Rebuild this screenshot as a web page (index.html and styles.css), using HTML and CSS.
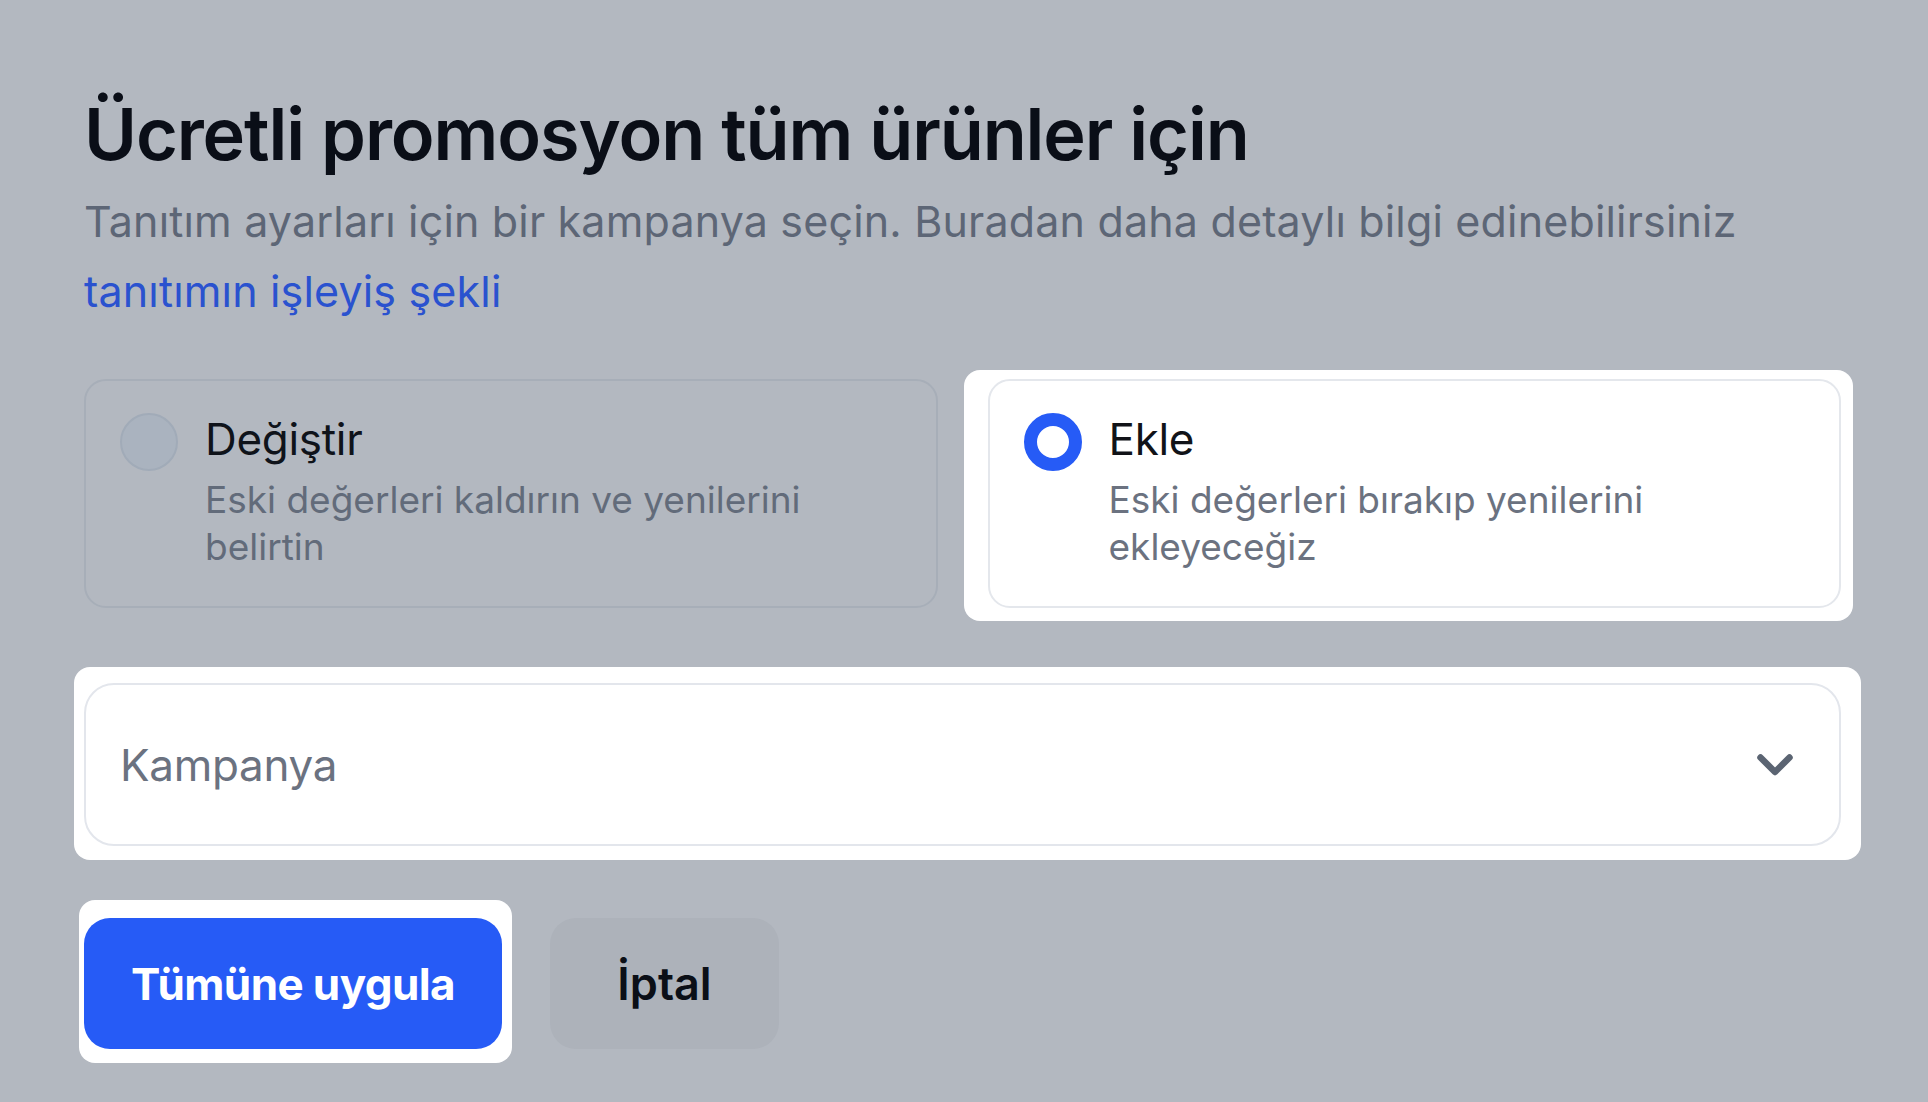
FILE: index.html
```html
<!DOCTYPE html>
<html lang="tr">
<head>
<meta charset="utf-8">
<title>Ücretli promosyon</title>
<link rel="stylesheet" href="styles.css">
</head>
<body>
<main class="page">
  <h1 class="title">Ücretli promosyon tüm ürünler için</h1>
  <p class="lead">Tanıtım ayarları için bir kampanya seçin. Buradan daha detaylı bilgi edinebilirsiniz<br><a class="lead-link" href="#">tanıtımın işleyiş şekli</a></p>

  <div class="options">
    <div class="option option-dim">
      <span class="radio radio-off"></span>
      <div class="option-text">
        <div class="option-label">Değiştir</div>
        <div class="option-desc">Eski değerleri kaldırın ve yenilerini belirtin</div>
      </div>
    </div>
    <div class="spot spot-option">
      <div class="option option-lit">
        <span class="radio radio-on"></span>
        <div class="option-text">
          <div class="option-label">Ekle</div>
          <div class="option-desc">Eski değerleri bırakıp yenilerini ekleyeceğiz</div>
        </div>
      </div>
    </div>
  </div>

  <div class="spot spot-select">
    <div class="select">
      <span class="select-placeholder">Kampanya</span>
      <svg class="chevron" width="38" height="25" viewBox="0 0 38 25" aria-hidden="true"><path d="M4.5 4.5 L19 19 L33.5 4.5" fill="none" stroke="#5b6472" stroke-width="6.5" stroke-linecap="round" stroke-linejoin="round"/></svg>
    </div>
  </div>

  <div class="actions">
    <div class="spot spot-btn">
      <button class="btn btn-primary" type="button">Tümüne uygula</button>
    </div>
    <button class="btn btn-ghost" type="button">İptal</button>
  </div>
</main>
</body>
</html>
```

FILE: styles.css
```css
* { box-sizing: border-box; }

html, body {
  margin: 0;
  height: 100%;
}

body {
  background: #b3b8c0;
  font-family: Inter, "Noto Sans", "Liberation Sans", sans-serif;
  color: #0a0e17;
  overflow: hidden;
}

.page {
  padding: 91px 87px 0 84px;
  display: flex;
  flex-direction: column;
}

.title {
  margin: 0;
  font-size: 72px;
  line-height: 86px;
  font-weight: 600;
  letter-spacing: -1.1px;
  color: #0a0e17;
}

.lead {
  margin: 9px 0 0;
  font-size: 43px;
  line-height: 70px;
  color: #5d6676;
  letter-spacing: 0.17px;
}

.lead-link {
  color: #2a52cf;
  text-decoration: none;
}

.options {
  margin-top: 53px;
  display: grid;
  grid-template-columns: 1fr 1fr;
  column-gap: 50px;
}

.spot {
  background: #ffffff;
  border-radius: 16px;
}

.spot-option {
  margin: -9px -12px -13px -24px;
  padding: 9px 12px 13px 24px;
}

.option {
  display: flex;
  align-items: flex-start;
  gap: 27px;
  padding: 32px 30px 36px 34px;
  border: 2px solid;
  border-radius: 22px;
  height: 100%;
}

.option-dim {
  border-color: #a7aeb8;
  background: #b3b8c0;
}

.option-lit {
  border-color: #e4e7ec;
  background: #ffffff;
}

.radio {
  flex: 0 0 58px;
  width: 58px;
  height: 58px;
  border-radius: 50%;
}

.radio-off {
  background: #aab3bf;
  border: 2px solid #a1abb8;
}

.radio-on {
  background: #ffffff;
  border: 13.5px solid #265bf6;
}

.option-text {
  display: flex;
  flex-direction: column;
  gap: 10px;
  margin-top: -1px;
}

.option-label {
  font-size: 44px;
  line-height: 54px;
  letter-spacing: -0.3px;
}

.option-desc {
  font-size: 37px;
  line-height: 47px;
  letter-spacing: 0;
}

.option-dim .option-label { color: #0f131a; }
.option-dim .option-desc { color: #626b7a; }
.option-lit .option-label { color: #111318; }
.option-lit .option-desc { color: #6b7280; }

.spot-select {
  margin: 59px -20px 0 -10px;
  padding: 16px 20px 14px 10px;
}

.select {
  height: 163px;
  border: 2px solid #e3e6ec;
  border-radius: 30px;
  background: #ffffff;
  display: flex;
  align-items: center;
  justify-content: space-between;
  padding: 0 45px 0 34px;
}

.select-placeholder {
  font-size: 44px;
  color: #6b7280;
  letter-spacing: -0.3px;
}

.chevron {
  display: block;
  margin-top: 2px;
}

.actions {
  margin-top: 40px;
  display: flex;
  align-items: flex-end;
  gap: 38px;
}

.spot-btn {
  margin-left: -5px;
  padding: 18px 10px 14px 5px;
}

.btn {
  height: 131px;
  border: 0;
  border-radius: 26px;
  font-family: Inter, "Noto Sans", "Liberation Sans", sans-serif;
  cursor: pointer;
}

.btn-primary {
  width: 418px;
  background: #265bf6;
  color: #ffffff;
  font-size: 44px;
  font-weight: 700;
  letter-spacing: -0.6px;
  display: block;
}

.btn-ghost {
  width: 229px;
  background: #adb2ba;
  color: #0b0f17;
  font-size: 45px;
  font-weight: 600;
  margin-bottom: 14px;
}
```
